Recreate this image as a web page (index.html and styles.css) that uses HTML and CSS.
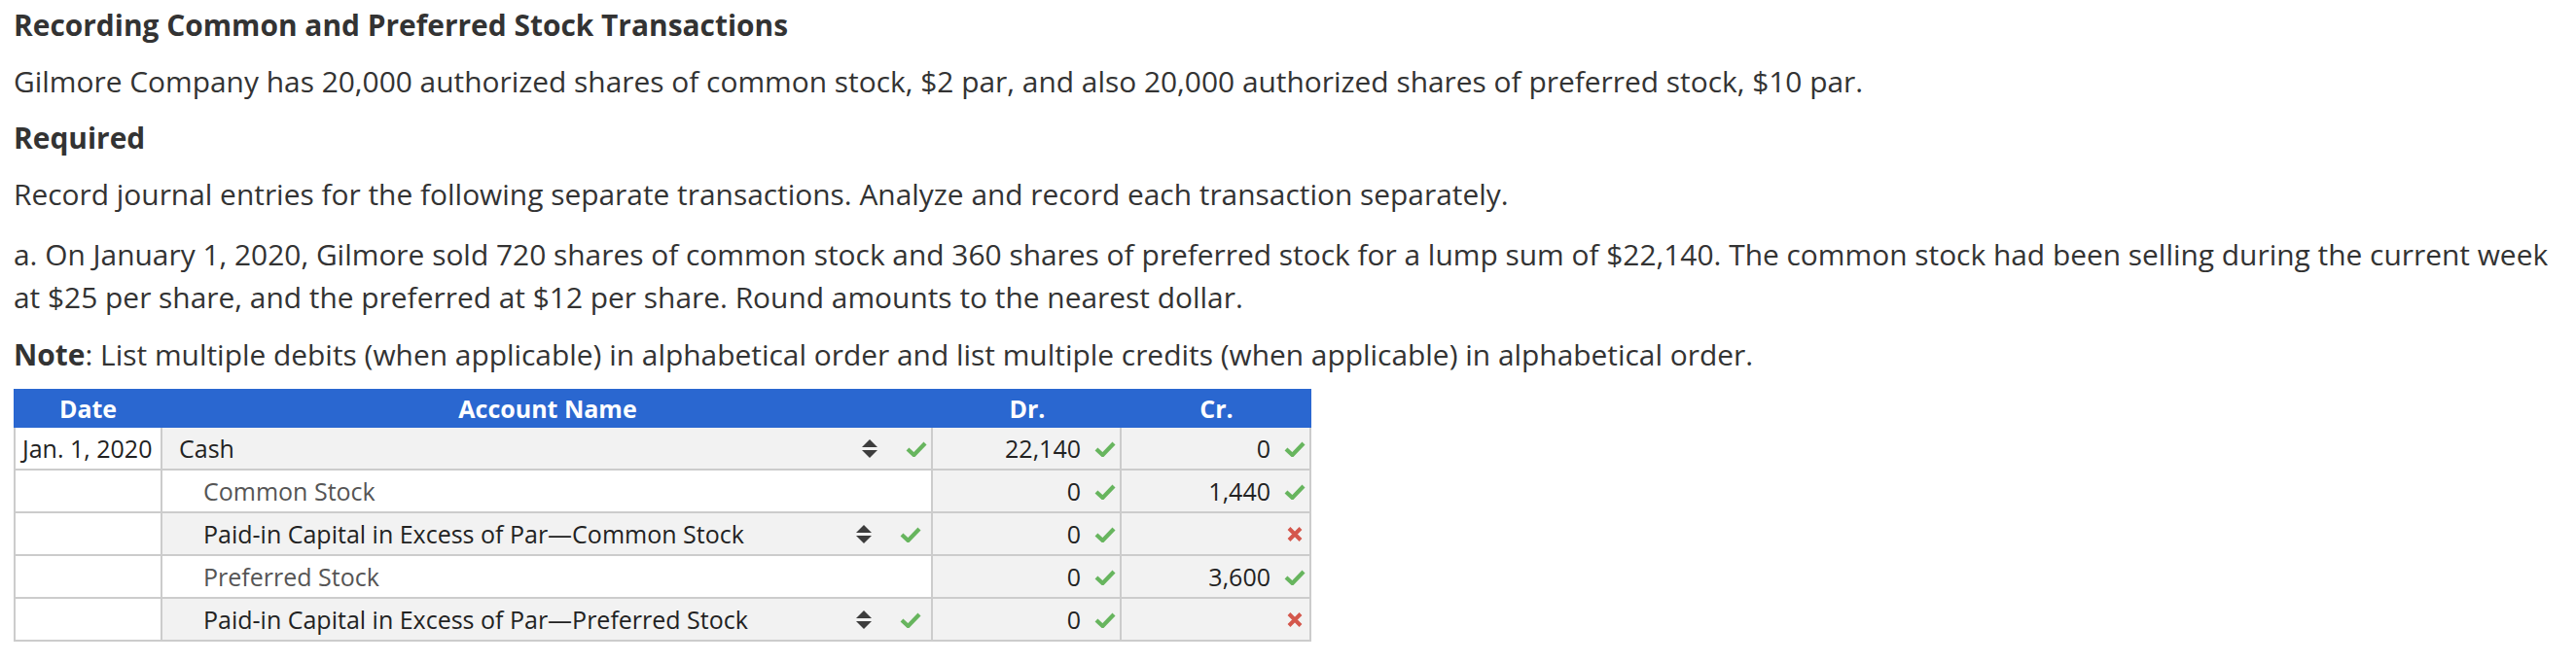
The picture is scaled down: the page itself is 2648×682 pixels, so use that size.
FILE: index.html
```html
<!DOCTYPE html>
<html lang="en">
<head>
<meta charset="utf-8">
<title>Recording Common and Preferred Stock Transactions</title>
<link rel="stylesheet" href="styles.css">
</head>
<body>
<main class="page">
  <p class="title">Recording Common and Preferred Stock Transactions</p>
  <p class="para">Gilmore Company has 20,000 authorized shares of common stock, $2 par, and also 20,000 authorized shares of preferred stock, $10 par.</p>
  <p class="title">Required</p>
  <p class="para intro">Record journal entries for the following separate transactions. Analyze and record each transaction separately.</p>
  <p class="para question">a. On January 1, 2020, Gilmore sold 720 shares of common stock and 360 shares of preferred stock for a lump sum of $22,140. The common stock had been selling during the current week at $25 per share, and the preferred at $12 per share. Round amounts to the nearest dollar.</p>
  <p class="para note"><strong>Note</strong>: List multiple debits (when applicable) in alphabetical order and list multiple credits (when applicable) in alphabetical order.</p>

  <div class="journal">
    <div class="head">Date</div>
    <div class="head">Account Name</div>
    <div class="head">Dr.</div>
    <div class="head">Cr.</div>

    <!-- row 1 -->
    <div class="cell date first">Jan. 1, 2020</div>
    <div class="cell account shaded select-row tight">
      <span class="acct-name">Cash</span>
      <svg class="arrows" viewBox="0 0 16 19" width="16" height="19"><path d="M8 0 L16 8 L0 8 Z M0 11 L16 11 L8 19 Z"/></svg>
      <svg class="check" viewBox="0 0 22 17" width="22" height="17"><path d="M2 9 L8.5 15 L20 3"/></svg>
    </div>
    <div class="cell amount"><span>22,140</span><svg class="check" viewBox="0 0 22 17" width="22" height="17"><path d="M2 9 L8.5 15 L20 3"/></svg></div>
    <div class="cell amount"><span>0</span><svg class="check" viewBox="0 0 22 17" width="22" height="17"><path d="M2 9 L8.5 15 L20 3"/></svg></div>

    <!-- row 2 -->
    <div class="cell date first"></div>
    <div class="cell account indent plain">Common Stock</div>
    <div class="cell amount"><span>0</span><svg class="check" viewBox="0 0 22 17" width="22" height="17"><path d="M2 9 L8.5 15 L20 3"/></svg></div>
    <div class="cell amount"><span>1,440</span><svg class="check" viewBox="0 0 22 17" width="22" height="17"><path d="M2 9 L8.5 15 L20 3"/></svg></div>

    <!-- row 3 -->
    <div class="cell date first"></div>
    <div class="cell account shaded indent select-row">
      <span class="acct-name">Paid-in Capital in Excess of Par—Common Stock</span>
      <svg class="arrows" viewBox="0 0 16 19" width="16" height="19"><path d="M8 0 L16 8 L0 8 Z M0 11 L16 11 L8 19 Z"/></svg>
      <svg class="check" viewBox="0 0 22 17" width="22" height="17"><path d="M2 9 L8.5 15 L20 3"/></svg>
    </div>
    <div class="cell amount"><span>0</span><svg class="check" viewBox="0 0 22 17" width="22" height="17"><path d="M2 9 L8.5 15 L20 3"/></svg></div>
    <div class="cell amount"><svg class="cross" viewBox="0 0 22 17" width="22" height="17"><path d="M5 2.5 L17 14.5 M17 2.5 L5 14.5"/></svg></div>

    <!-- row 4 -->
    <div class="cell date first"></div>
    <div class="cell account indent plain">Preferred Stock</div>
    <div class="cell amount"><span>0</span><svg class="check" viewBox="0 0 22 17" width="22" height="17"><path d="M2 9 L8.5 15 L20 3"/></svg></div>
    <div class="cell amount"><span>3,600</span><svg class="check" viewBox="0 0 22 17" width="22" height="17"><path d="M2 9 L8.5 15 L20 3"/></svg></div>

    <!-- row 5 -->
    <div class="cell date first"></div>
    <div class="cell account shaded indent select-row">
      <span class="acct-name">Paid-in Capital in Excess of Par—Preferred Stock</span>
      <svg class="arrows" viewBox="0 0 16 19" width="16" height="19"><path d="M8 0 L16 8 L0 8 Z M0 11 L16 11 L8 19 Z"/></svg>
      <svg class="check" viewBox="0 0 22 17" width="22" height="17"><path d="M2 9 L8.5 15 L20 3"/></svg>
    </div>
    <div class="cell amount"><span>0</span><svg class="check" viewBox="0 0 22 17" width="22" height="17"><path d="M2 9 L8.5 15 L20 3"/></svg></div>
    <div class="cell amount"><svg class="cross" viewBox="0 0 22 17" width="22" height="17"><path d="M5 2.5 L17 14.5 M17 2.5 L5 14.5"/></svg></div>
  </div>
</main>
</body>
</html>
```

FILE: styles.css
```css
* { box-sizing: border-box; }

html, body {
  margin: 0;
  padding: 0;
  background: #ffffff;
}

body {
  font-family: "Open Sans", "Liberation Sans", sans-serif;
  color: #333333;
}

.page {
  padding: 4px 8px 0 14px;
}

.title,
.para {
  margin: 0 0 14px 0;
  font-size: 29.9px;
  line-height: 44px;
}

.title {
  font-weight: 700;
}

.para strong {
  font-weight: 700;
}

.para.intro {
  margin-bottom: 18px;
}

.para.question {
  margin-bottom: 15px;
}

.para.note {
  margin-bottom: 13px;
}

.journal {
  width: 1334px;
  display: grid;
  grid-template-columns: 153px 792px 194px 195px;
  font-size: 25px;
  color: #222222;
}

.head {
  height: 40px;
  background: #2a67d0;
  color: #ffffff;
  font-weight: 700;
  font-size: 25px;
  display: flex;
  align-items: center;
  justify-content: center;
}

.cell {
  height: 44px;
  border-right: 2px solid #cccccc;
  border-bottom: 2px solid #cccccc;
  display: flex;
  align-items: center;
  background: #ffffff;
  white-space: nowrap;
}

.cell.first {
  border-left: 2px solid #cccccc;
}

.date {
  padding-left: 7px;
}

.account {
  padding-left: 17px;
  padding-right: 10px;
}

.account.indent {
  padding-left: 42px;
}

.account.tight {
  padding-right: 4px;
}

.account.plain {
  color: #555555;
}

.shaded {
  background: #f2f2f2;
}

.acct-name {
  flex: 1;
}

.arrows {
  fill: #3d3d3d;
  margin-right: 29px;
}

.check path {
  fill: none;
  stroke: #67b55e;
  stroke-width: 4.2;
  stroke-linecap: butt;
  stroke-linejoin: miter;
}

.cross path {
  fill: none;
  stroke: #d4574c;
  stroke-width: 4;
}

.amount {
  background: #f2f2f2;
  justify-content: flex-end;
  padding-right: 4px;
}

.amount span {
  margin-right: 14px;
}
```
